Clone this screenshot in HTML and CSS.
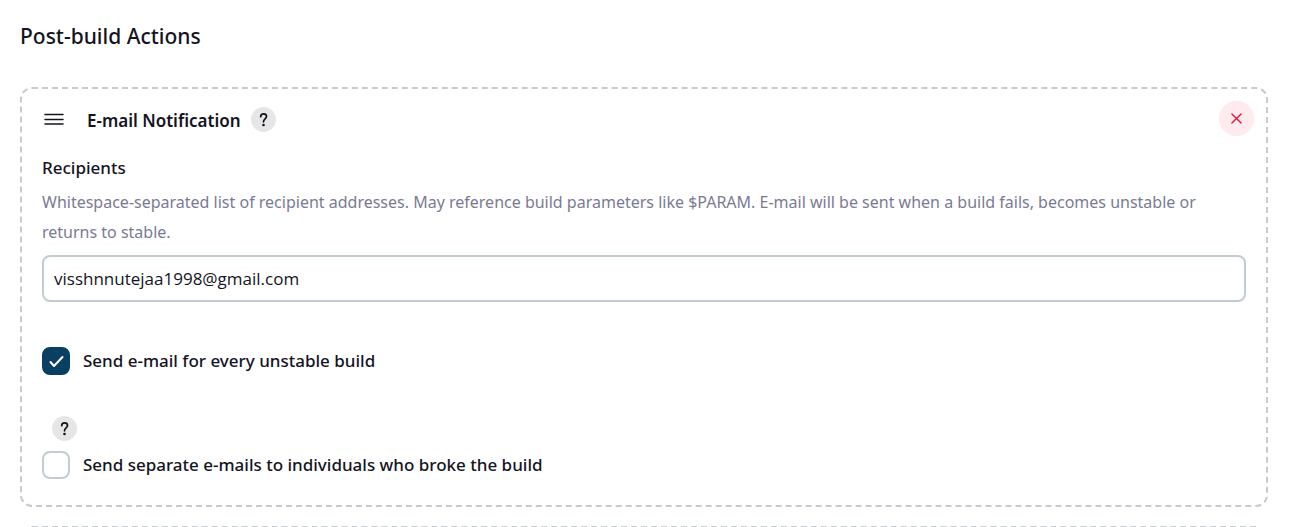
FILE: index.html
```html
<!DOCTYPE html>
<html lang="en">
<head>
<meta charset="utf-8">
<title>Post-build Actions</title>
<link rel="stylesheet" href="styles.css">
</head>
<body>
<main class="page">
  <h1 class="title">Post-build Actions</h1>
  <section class="card">
    <header class="card-header">
      <svg class="handle" viewBox="0 0 20 12" aria-hidden="true"><path d="M1 1.500h18M1 6.500h18M1 11h18"/></svg>
      <h2 class="card-title">E-mail Notification</h2>
      <button class="help" type="button" aria-label="Help for E-mail Notification"><svg viewBox="0 0 25 25" aria-hidden="true"><path d="M9.700 9.700C9.700 8 10.900 6.900 12.600 6.900S15.500 8 15.500 9.500C15.500 11.900 12.500 12 12.500 14.800"/><circle cx="12.500" cy="18" r="1.300"/></svg></button>
      <button class="remove" type="button" aria-label="Remove"><svg viewBox="0 0 12 12" aria-hidden="true"><path d="M1 1l10 10M11 1L1 11"/></svg></button>
    </header>
    <div class="field">
      <label class="label" for="recipients">Recipients</label>
      <p class="description">Whitespace-separated list of recipient addresses. May reference build parameters like <code>$PARAM</code>. E-mail will be sent when a build fails, becomes unstable or returns to stable.</p>
      <input class="input" id="recipients" type="text" value="visshnnutejaa1998@gmail.com">
    </div>
    <div class="option">
      <span class="box"><input class="check" id="unstable" type="checkbox" checked><svg class="tick" viewBox="0 0 28 28" aria-hidden="true"><path d="M8.500 15l3.500 4L20.500 10"/></svg></span>
      <label class="label" for="unstable">Send e-mail for every unstable build</label>
    </div>
    <div class="help-row">
      <button class="help" type="button" aria-label="Help for separate e-mails"><svg viewBox="0 0 25 25" aria-hidden="true"><path d="M9.700 9.700C9.700 8 10.900 6.900 12.600 6.900S15.500 8 15.500 9.500C15.500 11.900 12.500 12 12.500 14.800"/><circle cx="12.500" cy="18" r="1.300"/></svg></button>
    </div>
    <div class="option">
      <span class="box"><input class="check" id="separate" type="checkbox"></span>
      <label class="label" for="separate">Send separate e-mails to individuals who broke the build</label>
    </div>
  </section>
  <section class="card next"></section>
</main>
</body>
</html>
```
FILE: styles.css
```css
* { box-sizing: border-box; }
body {
  margin: 0;
  background: #fff;
  color: #14141f;
  font: 17px/30px "Noto Sans", "Open Sans", sans-serif;
}
.page { height: 100vh; padding: 20px 35px 0 20px; overflow: hidden; }
.title { margin: 0 0 35px; font-size: 21px; line-height: 32px; font-weight: 500; }
.card {
  padding: 12px 20px 26px;
  border: 2px dashed #c3ccd1;
  border-radius: 12px;
}
.card.next { margin-top: 19px; padding: 20px; }
.card-header { display: flex; align-items: center; height: 36px; }
.handle {
  width: 20px;
  height: 12px;
  margin: 0 23px 0 2px;
  fill: none;
  stroke: #14141f;
  stroke-width: 1.5;
  stroke-linecap: round;
}
.card-title { margin: 0; padding-top: 3px; font-size: 17px; line-height: 30px; font-weight: 600; }
.help {
  display: block;
  width: 25px;
  height: 25px;
  margin-left: 10px;
  padding: 0;
  border: 0;
  border-radius: 50%;
  background: #e6e6e6;
}
.help svg { display: block; }
.help path { fill: none; stroke: #14141f; stroke-width: 1.7; stroke-linecap: round; }
.help circle { fill: #14141f; }
.remove {
  display: grid;
  place-items: center;
  align-self: flex-start;
  width: 35px;
  height: 35px;
  margin: 0 -8px 0 auto;
  padding: 0;
  border: 0;
  border-radius: 50%;
  background: #fdebed;
}
.remove svg { width: 11px; height: 11px; fill: none; stroke: #e6143c; stroke-width: 1.5; stroke-linecap: round; }
.field { display: flex; flex-direction: column; margin: 16px 0 45px; }
.label { font-weight: 500; }
.description { margin: 4px 0 8px; color: #7b7a94; font-size: 16px; }
.description code { font: inherit; }
.input {
  width: 100%;
  height: 47px;
  padding: 0 10px;
  border: 2px solid #bfcdd0;
  border-radius: 8px;
  background: #fff;
  color: #14141f;
  font: 17px "Open Sans", "Noto Sans", sans-serif;
}
.option { display: flex; align-items: center; gap: 13px; height: 28px; }
.box { display: grid; width: 28px; height: 28px; }
.check {
  grid-area: 1 / 1;
  appearance: none;
  width: 28px;
  height: 28px;
  margin: 0;
  border: 2px solid #c3ccd1;
  border-radius: 8px;
  background: #fff;
}
.check:checked { border-color: #083f63; background: #083f63; }
.tick {
  grid-area: 1 / 1;
  z-index: 1;
  pointer-events: none;
  fill: none;
  stroke: #fff;
  stroke-width: 2;
  stroke-linecap: round;
  stroke-linejoin: round;
}
.help-row { margin: 41px 0 10px; }
```
